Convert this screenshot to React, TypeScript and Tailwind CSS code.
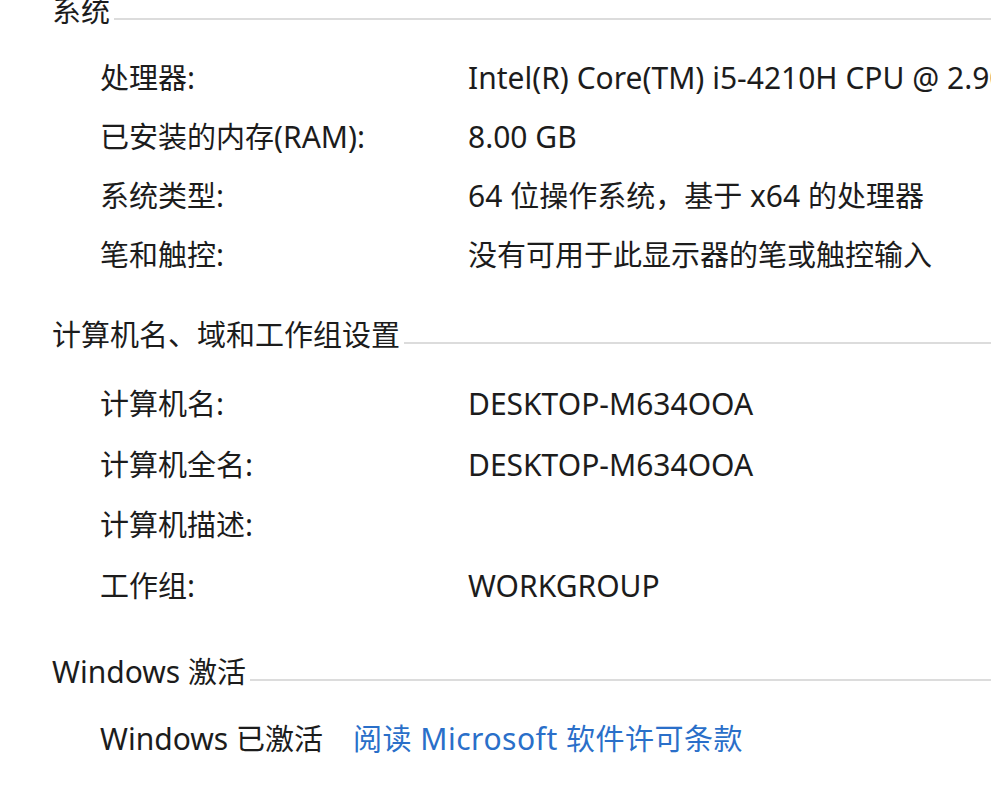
import React from "react";

const font = {
  fontFamily: '"Noto Sans", "Noto Sans CJK SC", sans-serif',
};

function T({ s }: { s: string }) {
  const parts = s.split(/([\u3000-\u303f\u4e00-\u9fff\uff00-\uffef]+)/);
  return (
    <>
      {parts.map((p, i) =>
        p === "" ? null : /[\u3000-\u303f\u4e00-\u9fff\uff00-\uffef]/.test(p) ? (
          <span key={i} className="text-[29px]">
            {p}
          </span>
        ) : (
          <span key={i} className="text-[30px]">
            {p}
          </span>
        )
      )}
    </>
  );
}

function Header({ title, className = "" }: { title: string; className?: string }) {
  return (
    <div className={`flex items-center h-[40px] pl-[52px] ${className}`}>
      <span className="whitespace-nowrap leading-[40px]">
        <T s={title} />
      </span>
      <div className="flex-1 h-[2px] bg-[#dcdcdc] ml-[4px] mt-[16px]" />
    </div>
  );
}

function Row({ label, value, h = "h-[59px]" }: { label: string; value: string; h?: string }) {
  return (
    <div className={`flex items-center ${h} pl-[100px] whitespace-nowrap`}>
      <div className="w-[368px] shrink-0">
        <T s={label} />
      </div>
      <div>
        <T s={value} />
      </div>
    </div>
  );
}

export default function App() {
  return (
    <div
      className="w-[991px] h-[787px] overflow-hidden bg-white text-[#1c1c1c] text-[29px] leading-[40px]"
      style={font}
    >
      <Header title="系统" className="-mt-[9px]" />
      <div className="mt-[17px]">
        <Row label="处理器:" value="Intel(R) Core(TM) i5-4210H CPU @ 2.90GHz" />
        <Row label="已安装的内存(RAM):" value="8.00 GB" />
        <Row label="系统类型:" value="64 位操作系统，基于 x64 的处理器" />
        <Row label="笔和触控:" value="没有可用于此显示器的笔或触控输入" />
      </div>
      <Header title="计算机名、域和工作组设置" className="mt-[31px]" />
      <div className="mt-[19px]">
        <Row h="h-[60.5px]" label="计算机名:" value="DESKTOP-M634OOA" />
        <Row h="h-[60.5px]" label="计算机全名:" value="DESKTOP-M634OOA" />
        <Row h="h-[60.5px]" label="计算机描述:" value="" />
        <Row h="h-[60.5px]" label="工作组:" value="WORKGROUP" />
      </div>
      <Header title="Windows 激活" className="mt-[36px]" />
      <div className="mt-[17px] flex items-center h-[60px] pl-[100px] whitespace-nowrap">
        <span>
          <T s="Windows 已激活" />
        </span>
        <span className="ml-[30px] text-[#2a6fc9] tracking-[0.5px]">
          <T s="阅读 Microsoft 软件许可条款" />
        </span>
      </div>
    </div>
  );
}
